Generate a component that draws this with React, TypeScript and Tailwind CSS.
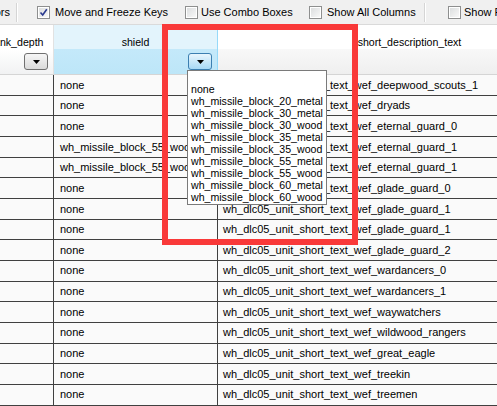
import React from 'react';

const rows: { shield: string; text: string }[] = [
  { shield: 'none', text: 'wh_dlc05_unit_short_text_wef_deepwood_scouts_1' },
  { shield: 'none', text: 'wh_dlc05_unit_short_text_wef_dryads' },
  { shield: 'none', text: 'wh_dlc05_unit_short_text_wef_eternal_guard_0' },
  { shield: 'wh_missile_block_55_wood', text: 'wh_dlc05_unit_short_text_wef_eternal_guard_1' },
  { shield: 'wh_missile_block_55_wood', text: 'wh_dlc05_unit_short_text_wef_eternal_guard_1' },
  { shield: 'none', text: 'wh_dlc05_unit_short_text_wef_glade_guard_0' },
  { shield: 'none', text: 'wh_dlc05_unit_short_text_wef_glade_guard_1' },
  { shield: 'none', text: 'wh_dlc05_unit_short_text_wef_glade_guard_1' },
  { shield: 'none', text: 'wh_dlc05_unit_short_text_wef_glade_guard_2' },
  { shield: 'none', text: 'wh_dlc05_unit_short_text_wef_wardancers_0' },
  { shield: 'none', text: 'wh_dlc05_unit_short_text_wef_wardancers_1' },
  { shield: 'none', text: 'wh_dlc05_unit_short_text_wef_waywatchers' },
  { shield: 'none', text: 'wh_dlc05_unit_short_text_wef_wildwood_rangers' },
  { shield: 'none', text: 'wh_dlc05_unit_short_text_wef_great_eagle' },
  { shield: 'none', text: 'wh_dlc05_unit_short_text_wef_treekin' },
  { shield: 'none', text: 'wh_dlc05_unit_short_text_wef_treemen' },
  { shield: 'none', text: 'wh_dlc05_unit_short_text_wef_warhawk_riders' },
];

const options = [
  '',
  'none',
  'wh_missile_block_20_metal',
  'wh_missile_block_30_metal',
  'wh_missile_block_30_wood',
  'wh_missile_block_35_metal',
  'wh_missile_block_35_wood',
  'wh_missile_block_55_metal',
  'wh_missile_block_55_wood',
  'wh_missile_block_60_metal',
  'wh_missile_block_60_wood',
];

const Checkbox = ({ checked }: { checked?: boolean }) => (
  <div className="w-[13px] h-[13px] border border-[#8e8f8f] bg-white p-[1px] shrink-0">
    <div className="w-full h-full bg-gradient-to-br from-[#dcdedf] to-[#f8f8f8] relative">
      {checked && (
        <svg viewBox="0 0 9 9" className="absolute inset-0 w-full h-full">
          <path d="M1.5 4.5 L3.7 7 L7.8 1.2" fill="none" stroke="#2a3a8f" strokeWidth="1.6" />
        </svg>
      )}
    </div>
  </div>
);

const Separator = () => <div className="w-[2px] h-[19px] border-l border-[#d5d5d5] border-r border-r-white shrink-0" />;

const DropButton = ({ active }: { active?: boolean }) => (
  <div
    className={
      active
        ? 'w-[24px] h-[17px] rounded-[3px] border border-[#3c7fb1] bg-gradient-to-b from-[#e9f6fd] to-[#a7d9f5] flex items-center justify-center'
        : 'w-[24px] h-[17px] rounded-[3px] border border-[#707070] bg-gradient-to-b from-[#f6f6f6] to-[#dadada] flex items-center justify-center'
    }
  >
    <svg width="7" height="4" viewBox="0 0 7 4">
      <path d="M0 0 H7 L3.5 4 Z" fill="#000" />
    </svg>
  </div>
);

export default function App() {
  return (
    <div className="w-[497px] h-[406px] relative overflow-hidden bg-white font-['Liberation_Sans',Arial,sans-serif] text-black">
      {/* toolbar */}
      <div className="h-[25px] bg-[#f0f0f0] border-b border-[#dadada] flex items-center text-[11px] whitespace-nowrap">
        <span className="w-[10px] shrink-0 overflow-hidden flex justify-end">
          <span>ors</span>
        </span>
        <div className="ml-[6px] shrink-0"><Separator /></div>
        <div className="ml-[19px] shrink-0"><Checkbox checked /></div>
        <span className="ml-[5px] w-[130px] shrink-0">Move and Freeze Keys</span>
        <Checkbox />
        <span className="ml-[3px] w-[108px] shrink-0">Use Combo Boxes</span>
        <Checkbox />
        <span className="ml-[5px] w-[97px] shrink-0">Show All Columns</span>
        <Separator />
        <div className="ml-[22px] shrink-0"><Checkbox /></div>
        <span className="ml-[3px] shrink-0">Show Filter</span>
      </div>

      {/* grid */}
      <div className="-ml-[19px] text-[11px]">
        <div className="flex h-[50px] border-b border-[#d5d5d5] text-[10.6px] leading-[12px]">
          <div className="w-[73px] shrink-0 flex flex-col bg-gradient-to-b from-white via-white to-[#f1f2f3] border-r border-[#e2e2e2]">
            <div className="h-[27px] pt-[11px] text-center">rank_depth</div>
            <div className="flex-1 flex justify-end pr-[5px] pt-[1px]"><DropButton /></div>
          </div>
          <div className="w-[164px] shrink-0 flex flex-col border-r border-[#96d9f9]">
            <div className="h-[24px] bg-[#e3f4fc] pt-[11px] text-center">shield</div>
            <div className="flex-1 bg-gradient-to-b from-[#c4e9fa] to-[#bde6f8] flex justify-end pr-[5px] pt-[4px]"><DropButton active /></div>
          </div>
          <div className="w-[383px] shrink-0 flex flex-col">
            <div className="h-[24px] bg-white pt-[11px] text-center whitespace-nowrap">short_description_text</div>
            <div className="flex-1 bg-gradient-to-b from-[#f8f8f8] to-[#efefef]" />
          </div>
        </div>

        {rows.map((r, i) => (
          <div key={i} className="flex h-[20.67px] border-b border-[#404040] bg-[#fafafa]">
            <div className="w-[73px] shrink-0 border-r border-[#404040]" />
            <div className="w-[164px] shrink-0 border-r border-[#404040] pl-[6px] flex items-center overflow-hidden whitespace-nowrap">
              {r.shield}
            </div>
            <div className="w-[383px] shrink-0 pl-[5px] flex items-center overflow-hidden whitespace-nowrap">
              {r.text}
            </div>
          </div>
        ))}
      </div>

      {/* open combo list */}
      <div className="absolute left-[187px] top-[70px] w-[140px] h-[135px] border border-[#7a7a7a] bg-white text-[10.6px] leading-[12px] whitespace-nowrap overflow-hidden">
        {options.map((o, i) => (
          <div key={i} className="h-[12px] pl-[3px]">{o}</div>
        ))}
      </div>

      {/* highlight frame */}
      <div className="absolute left-[162px] top-[24px] w-[196px] h-[221px] border-[6px] border-[#f93939]" />
    </div>
  );
}
